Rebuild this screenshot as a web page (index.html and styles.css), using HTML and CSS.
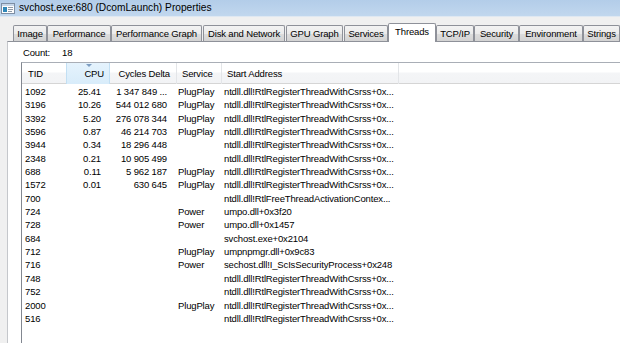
FILE: index.html
```html
<!DOCTYPE html>
<html>
<head>
<meta charset="utf-8">
<link rel="stylesheet" href="styles.css">
</head>
<body>
<div class="titlebar">
  <svg class="appicon" width="14" height="11" viewBox="0 0 14 11">
    <rect x="0.5" y="0.5" width="13" height="10" fill="#fdfdfd" stroke="#7d8ea3"/>
    <rect x="1" y="1" width="12" height="2" fill="#c6d6e8"/>
    <rect x="2" y="4" width="4" height="5" fill="#2f87b8"/>
    <rect x="7" y="4" width="5" height="1" fill="#8e99a6"/>
    <rect x="7" y="6" width="5" height="1" fill="#8e99a6"/>
    <rect x="7" y="8" width="4" height="1" fill="#8e99a6"/>
  </svg>
  <span class="title">svchost.exe:680 (DcomLaunch) Properties</span>
</div>
<div class="window">
  <div class="tabs">
    <div class="tab w-image">Image</div>
    <div class="tab w-perf">Performance</div>
    <div class="tab w-perfg">Performance Graph</div>
    <div class="tab w-disk">Disk and Network</div>
    <div class="tab w-gpu">GPU Graph</div>
    <div class="tab w-svc">Services</div>
    <div class="tab selected w-thr">Threads</div>
    <div class="tab w-tcp">TCP/IP</div>
    <div class="tab w-sec">Security</div>
    <div class="tab w-env">Environment</div>
    <div class="tab w-str">Strings</div>
  </div>
  <div class="panel">
    <div class="count"><span class="count-label">Count:</span><span>18</span></div>
    <div class="list">
      <div class="header row-grid">
        <div class="hcell left tid">TID</div>
        <div class="hcell right sorted">CPU</div>
        <div class="hcell right cyc">Cycles Delta</div>
        <div class="hcell left svc">Service</div>
        <div class="hcell left addr">Start Address</div>
        <div class="hcell fill"></div>
      </div>
      <div class="rows">
        <div class="row row-grid"><span class="c-tid">1092</span><span class="c-cpu">25.41</span><span class="c-cyc">1 347 849 ...</span><span class="c-svc">PlugPlay</span><span class="c-addr">ntdll.dll!RtlRegisterThreadWithCsrss+0x...</span></div>
        <div class="row row-grid"><span class="c-tid">3196</span><span class="c-cpu">10.26</span><span class="c-cyc">544 012 680</span><span class="c-svc">PlugPlay</span><span class="c-addr">ntdll.dll!RtlRegisterThreadWithCsrss+0x...</span></div>
        <div class="row row-grid"><span class="c-tid">3392</span><span class="c-cpu">5.20</span><span class="c-cyc">276 078 344</span><span class="c-svc">PlugPlay</span><span class="c-addr">ntdll.dll!RtlRegisterThreadWithCsrss+0x...</span></div>
        <div class="row row-grid"><span class="c-tid">3596</span><span class="c-cpu">0.87</span><span class="c-cyc">46 214 703</span><span class="c-svc">PlugPlay</span><span class="c-addr">ntdll.dll!RtlRegisterThreadWithCsrss+0x...</span></div>
        <div class="row row-grid"><span class="c-tid">3944</span><span class="c-cpu">0.34</span><span class="c-cyc">18 296 448</span><span class="c-svc"></span><span class="c-addr">ntdll.dll!RtlRegisterThreadWithCsrss+0x...</span></div>
        <div class="row row-grid"><span class="c-tid">2348</span><span class="c-cpu">0.21</span><span class="c-cyc">10 905 499</span><span class="c-svc"></span><span class="c-addr">ntdll.dll!RtlRegisterThreadWithCsrss+0x...</span></div>
        <div class="row row-grid"><span class="c-tid">688</span><span class="c-cpu">0.11</span><span class="c-cyc">5 962 187</span><span class="c-svc">PlugPlay</span><span class="c-addr">ntdll.dll!RtlRegisterThreadWithCsrss+0x...</span></div>
        <div class="row row-grid"><span class="c-tid">1572</span><span class="c-cpu">0.01</span><span class="c-cyc">630 645</span><span class="c-svc">PlugPlay</span><span class="c-addr">ntdll.dll!RtlRegisterThreadWithCsrss+0x...</span></div>
        <div class="row row-grid"><span class="c-tid">700</span><span class="c-cpu"></span><span class="c-cyc"></span><span class="c-svc"></span><span class="c-addr">ntdll.dll!RtlFreeThreadActivationContex...</span></div>
        <div class="row row-grid"><span class="c-tid">724</span><span class="c-cpu"></span><span class="c-cyc"></span><span class="c-svc">Power</span><span class="c-addr">umpo.dll+0x3f20</span></div>
        <div class="row row-grid"><span class="c-tid">728</span><span class="c-cpu"></span><span class="c-cyc"></span><span class="c-svc">Power</span><span class="c-addr">umpo.dll+0x1457</span></div>
        <div class="row row-grid"><span class="c-tid">684</span><span class="c-cpu"></span><span class="c-cyc"></span><span class="c-svc"></span><span class="c-addr">svchost.exe+0x2104</span></div>
        <div class="row row-grid"><span class="c-tid">712</span><span class="c-cpu"></span><span class="c-cyc"></span><span class="c-svc">PlugPlay</span><span class="c-addr">umpnpmgr.dll+0x9c83</span></div>
        <div class="row row-grid"><span class="c-tid">716</span><span class="c-cpu"></span><span class="c-cyc"></span><span class="c-svc">Power</span><span class="c-addr">sechost.dll!I_ScIsSecurityProcess+0x248</span></div>
        <div class="row row-grid"><span class="c-tid">748</span><span class="c-cpu"></span><span class="c-cyc"></span><span class="c-svc"></span><span class="c-addr">ntdll.dll!RtlRegisterThreadWithCsrss+0x...</span></div>
        <div class="row row-grid"><span class="c-tid">752</span><span class="c-cpu"></span><span class="c-cyc"></span><span class="c-svc"></span><span class="c-addr">ntdll.dll!RtlRegisterThreadWithCsrss+0x...</span></div>
        <div class="row row-grid"><span class="c-tid">2000</span><span class="c-cpu"></span><span class="c-cyc"></span><span class="c-svc">PlugPlay</span><span class="c-addr">ntdll.dll!RtlRegisterThreadWithCsrss+0x...</span></div>
        <div class="row row-grid"><span class="c-tid">516</span><span class="c-cpu"></span><span class="c-cyc"></span><span class="c-svc"></span><span class="c-addr">ntdll.dll!RtlRegisterThreadWithCsrss+0x...</span></div>
      </div>
    </div>
  </div>
</div>
</body>
</html>
```
FILE: styles.css
```css
html, body {
  margin: 0;
  padding: 0;
}
body {
  width: 620px;
  height: 343px;
  overflow: hidden;
  background: #f0f0f0;
  font-family: "Liberation Sans", Arial, sans-serif;
  font-size: 9.5px;
  letter-spacing: -0.15px;
  color: #000;
}
.titlebar {
  height: 17px;
  display: flex;
  align-items: center;
  background: linear-gradient(to bottom, #b3cde9, #c1d7ee);
  border-bottom: 1px solid #dfe8f2;
  box-sizing: border-box;
}
.appicon {
  margin-left: 1px;
  margin-right: 4px;
  flex: none;
}
.title {
  font-size: 10.2px;
  letter-spacing: 0;
  color: #000;
  line-height: 12px;
}
.window {
  padding-top: 6px;
  height: 326px;
  box-sizing: border-box;
  display: flex;
  flex-direction: column;
}
.tabs {
  display: flex;
  align-items: flex-end;
  height: 18px;
  padding-left: 13px;
  position: relative;
  z-index: 1;
}
.tab {
  flex: none;
  height: 16px;
  box-sizing: border-box;
  border: 1px solid #8e9199;
  border-bottom: none;
  border-radius: 2px 2px 0 0;
  background: linear-gradient(to bottom, #f3f3f3 0%, #ebebeb 50%, #dddddd 51%, #d3d3d3 100%);
  text-align: center;
  line-height: 15px;
  white-space: nowrap;
  overflow: hidden;
}
.tab.selected {
  height: 19px;
  margin-bottom: -1px;
  background: #fff;
  line-height: 16px;
}
.w-image { width: 34px; }
.w-perf { width: 64px; }
.w-perfg { width: 91px; margin-right: 1px; }
.w-disk { width: 82px; margin-right: 1px; }
.w-gpu { width: 57px; margin-right: 1px; }
.w-svc { width: 44px; }
.w-thr { width: 48px; }
.w-tcp { width: 38px; }
.w-sec { width: 45px; }
.w-env { width: 64px; }
.w-str { width: 37px; }
.panel {
  flex: 1;
  margin-left: 7px;
  background: #fff;
  border-left: 1px solid #c5c7cb;
  border-top: 1px solid #8e9199;
  padding-left: 13px;
  overflow: hidden;
}
.count {
  padding: 5px 0 0 2px;
  height: 17px;
  line-height: 12px;
  box-sizing: border-box;
  display: flex;
}
.count-label {
  width: 39px;
}
.list {
  margin-top: 3px;
  width: 700px;
  height: 300px;
  border-left: 1px solid #828790;
  border-top: 1px solid #a9aeb6;
  background: #fff;
}
.row-grid {
  display: grid;
  grid-template-columns: 45px 43px 67px 45px 177px 1fr;
}
.header {
  height: 21px;
  border-bottom: 1px solid #d5d5d5;
  background: linear-gradient(to bottom, #ffffff 0%, #ffffff 45%, #f4f5f7 50%, #f2f3f5 100%);
  box-sizing: border-box;
}
.hcell {
  position: relative;
  line-height: 21px;
  border-right: 1px solid #e3e5e8;
  white-space: nowrap;
}
.hcell.left { padding-left: 5px; }
.hcell.tid { padding-left: 6px; }
.hcell.right { text-align: right; }
.hcell.sorted {
  padding-right: 5px;
  background: linear-gradient(to bottom, #e5f3fd, #d8ecfa);
  border-left: 1px solid #c2dff3;
  border-right: 1px solid #c2dff3;
  margin-left: -1px;
}
.hcell.sorted::before {
  content: "";
  position: absolute;
  top: 1px;
  left: 19px;
  border-left: 3px solid transparent;
  border-right: 3px solid transparent;
  border-top: 3px solid #7d9dc2;
}
.hcell.cyc { padding-right: 6px; }
.hcell.fill { border-right: none; }
.rows {
  padding-top: 1px;
}
.row {
  height: 13.35px;
  line-height: 13.35px;
  white-space: nowrap;
}
.c-tid { padding-left: 3px; }
.c-cpu { text-align: right; padding-right: 9px; }
.c-cyc { text-align: right; padding-right: 10px; }
.c-svc { padding-left: 1px; }
.c-addr { padding-left: 2px; }
```
